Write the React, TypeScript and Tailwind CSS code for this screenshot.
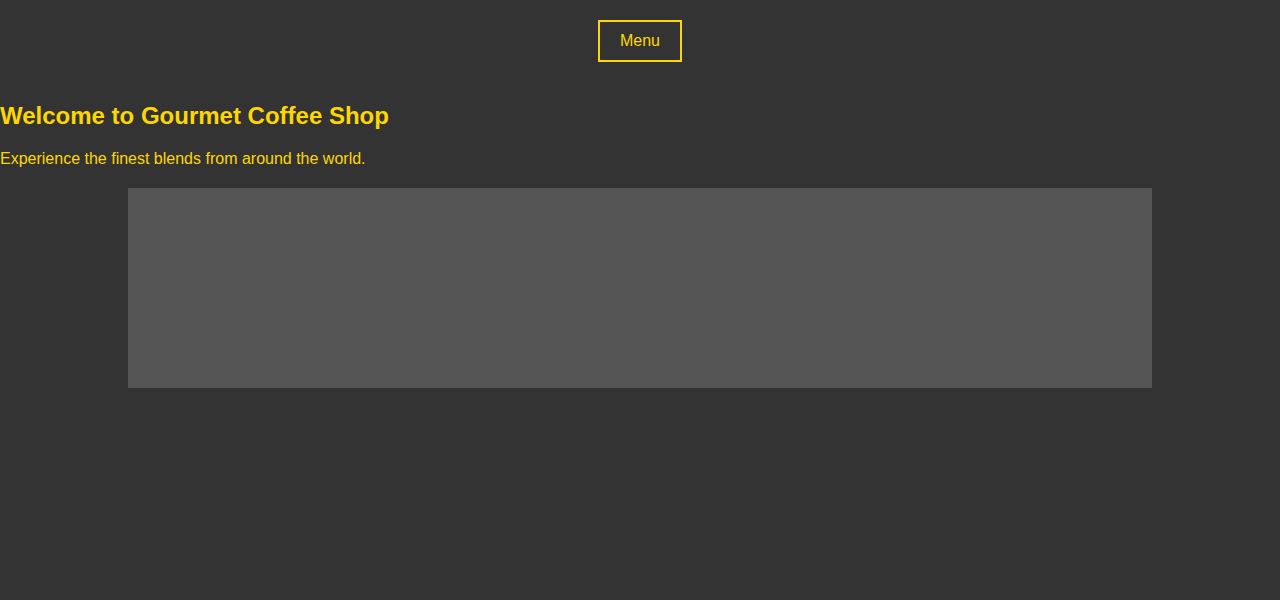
import React, { FC } from "react";

const App: FC = () => {
  return (
    <div className="min-h-[600px] w-full bg-[#333333] text-[#ffd700] font-['Liberation_Sans',Arial,sans-serif]">
      {/* Top nav */}
      <nav className="flex justify-center pt-5">
        <button className="border-2 border-[#ffd700] bg-transparent px-5 py-[10px] text-base leading-[18px] text-[#ffd700]">
          Menu
        </button>
      </nav>

      {/* Hero */}
      <section className="mt-9">
        <h1 className="text-2xl font-bold leading-9">Welcome to Gourmet Coffee Shop</h1>
        <p className="mt-[13px] text-base leading-6">
          Experience the finest blends from around the world.
        </p>
        <div className="mx-auto mt-[17px] h-[200px] w-[80%] bg-[#555555]" />
      </section>
    </div>
  );
};

export default App;
